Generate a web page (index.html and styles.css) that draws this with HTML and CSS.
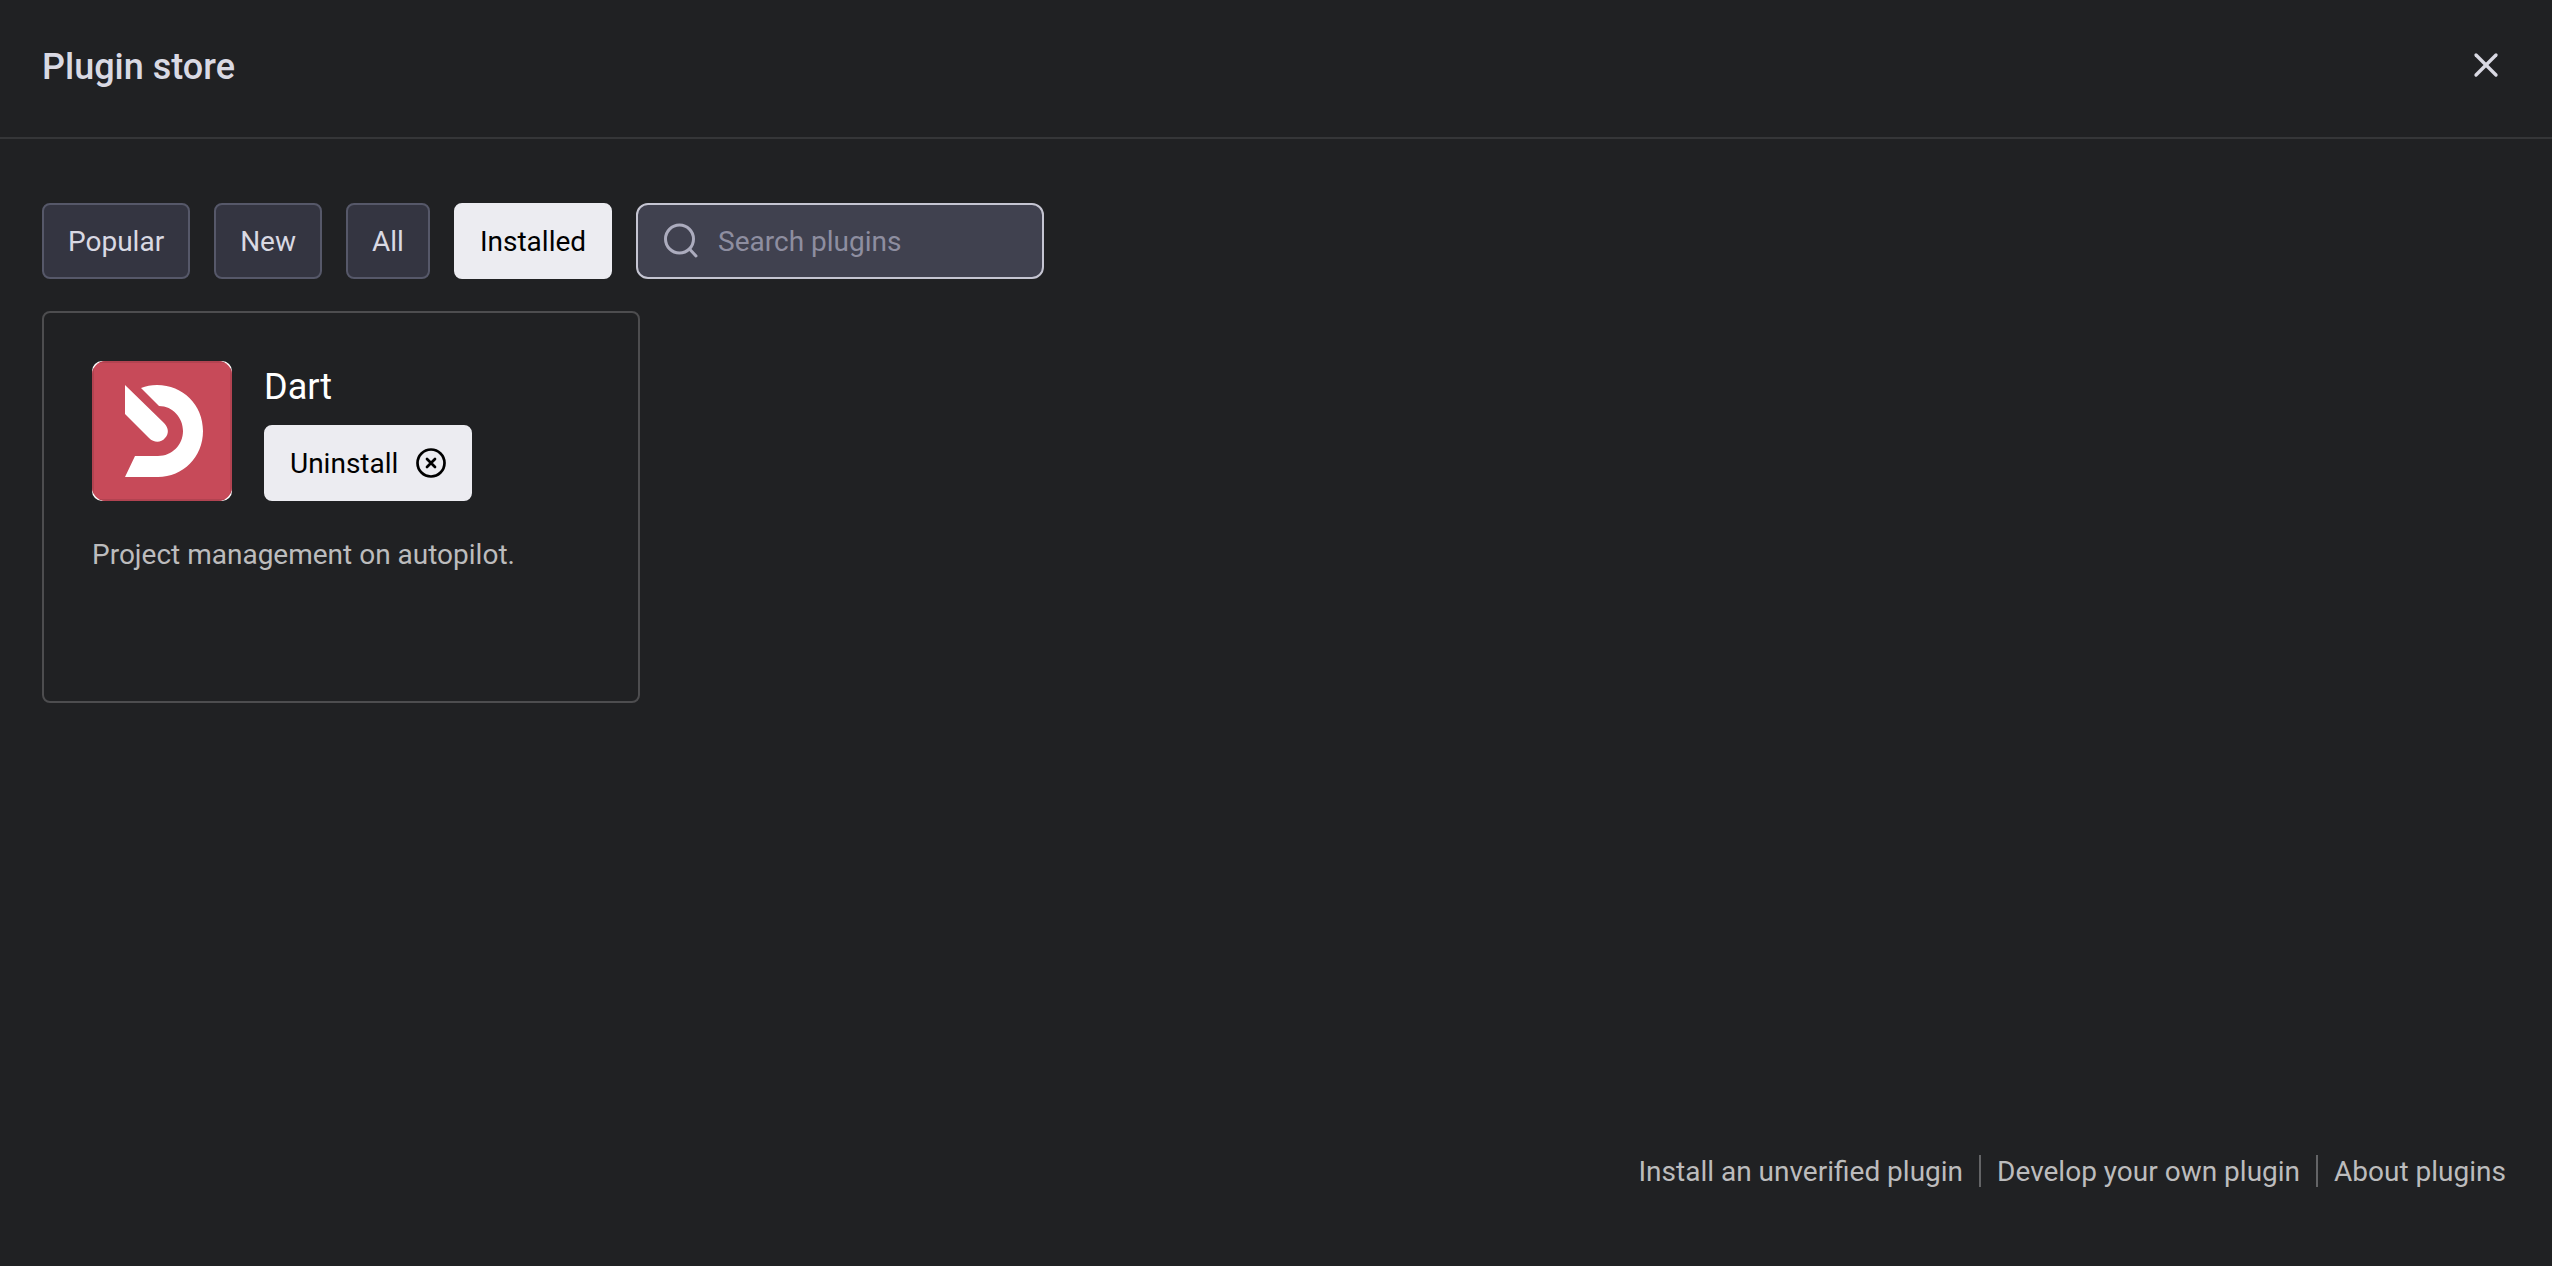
FILE: index.html
```html
<!DOCTYPE html>
<html lang="en">
<head>
    <meta charset="UTF-8">
    <meta name="viewport" content="width=device-width, initial-scale=1.0">
    <title>Plugin store</title>
    <link rel="stylesheet" href="styles.css">
</head>
<body>
    <div class="store">
        <header class="store-header">
            <h1>Plugin store</h1>
            <button type="button" class="close" aria-label="Close">
                <svg viewBox="0 0 24 24" fill="none" stroke="currentColor" stroke-width="2" stroke-linecap="round" stroke-linejoin="round">
                    <line x1="18" y1="6" x2="6" y2="18"></line>
                    <line x1="6" y1="6" x2="18" y2="18"></line>
                </svg>
            </button>
        </header>

        <main class="content">
            <!-- Filters and search -->
            <div class="toolbar">
                <button type="button" class="btn">Popular</button>
                <button type="button" class="btn">New</button>
                <button type="button" class="btn">All</button>
                <button type="button" class="btn btn-light">Installed</button>
                <label class="search">
                    <svg viewBox="0 0 40 40" fill="none" stroke="currentColor" stroke-width="3" stroke-linecap="round" aria-hidden="true">
                        <circle cx="17.5" cy="17" r="14"></circle>
                        <line x1="27.5" y1="27" x2="34" y2="34"></line>
                    </svg>
                    <input type="text" placeholder="Search plugins" aria-label="Search plugins">
                </label>
            </div>

            <div class="plugins">
                <article class="card">
                    <div class="card-top">
                        <div class="logo">
                            <svg viewBox="0 0 140 140" aria-hidden="true">
                                <rect width="140" height="140" fill="#c74a59"></rect>
                                <rect x="1" y="1" width="138" height="138" fill="none" stroke="#b24351" stroke-width="2"></rect>
                                <path fill="#fff" d="M33 24 L72 62 C77 67 77 73 73 77 C69 82 62 82 57 77 L33 53 Z"></path>
                                <path fill="#fff" d="M49 27 C54 25 59 24 65 24 C91 24 111 44 111 70 C111 96 91 116 66 116 H33 L43 95 H66 C80 95 91 84 91 70 C91 57 81 45 67 45 Z"></path>
                            </svg>
                        </div>
                        <div class="card-info">
                            <h2>Dart</h2>
                            <button type="button" class="btn btn-light">
                                Uninstall
                                <svg viewBox="0 0 32 32" fill="none" stroke="currentColor" stroke-width="2.7" stroke-linecap="round" aria-hidden="true">
                                    <circle cx="17" cy="15" r="13.5"></circle>
                                    <path d="M13 11 L21 19 M21 11 L13 19"></path>
                                </svg>
                            </button>
                        </div>
                    </div>
                    <p class="description">Project management on autopilot.</p>
                </article>
            </div>
        </main>

        <footer class="store-footer">
            <a href="#">Install an unverified plugin</a>
            <span class="divider"></span>
            <a href="#">Develop your own plugin</a>
            <span class="divider"></span>
            <a href="#">About plugins</a>
        </footer>
    </div>
</body>
</html>
```
FILE: styles.css
```css
* {
    margin: 0;
    padding: 0;
    box-sizing: border-box;
}

body {
    font-family: Roboto, "Liberation Sans", sans-serif;
    font-size: 28px;
    line-height: 40px;
    background-color: #202123;
    color: #d9d9e3;
}

button,
input {
    font: inherit;
}

.store {
    display: flex;
    flex-direction: column;
    min-height: 100vh;
    background-color: #202123;
}

.store-header {
    display: flex;
    justify-content: space-between;
    align-items: center;
    height: 139px;
    padding: 0 46px 8px 42px;
    border-bottom: 2px solid #353638;
}

h1 {
    padding-top: 4px;
    font-size: 36px;
    font-weight: 500;
}

.close {
    display: flex;
    border: none;
    background: none;
    color: #d9d9e3;
    cursor: pointer;
}

.close svg {
    width: 40px;
    height: 40px;
}

.content {
    flex: 1;
    padding: 64px 46px 32px 42px;
}

/* Filters */
.toolbar {
    display: flex;
    gap: 24px;
    margin-bottom: 32px;
}

.btn {
    display: flex;
    align-items: center;
    gap: 16px;
    height: 76px;
    padding: 2px 24px 0;
    border: 2px solid #565869;
    border-radius: 8px;
    background-color: #343541;
    color: #d9d9e3;
    cursor: pointer;
}

.btn-light {
    border-color: #ececf1;
    background-color: #ececf1;
    color: #000;
}

.btn svg {
    width: 32px;
    height: 32px;
}

.search {
    display: flex;
    align-items: center;
    gap: 16px;
    width: 408px;
    height: 76px;
    padding: 2px 24px 0;
    border: 2px solid #c5c5d2;
    border-radius: 12px;
    background-color: #40414f;
    color: #acacbe;
}

.search svg {
    flex: none;
    width: 40px;
    height: 40px;
}

.search input {
    width: 100%;
    border: none;
    outline: none;
    background: none;
    color: #fff;
}

.search input::placeholder {
    color: #8e8ea0;
}

/* Plugin cards */
.plugins {
    display: grid;
    grid-template-columns: repeat(4, 1fr);
    gap: 24px;
}

.card {
    display: flex;
    flex-direction: column;
    gap: 32px;
    padding: 48px;
    border: 2px solid #4d4d4f;
    border-radius: 8px;
}

.card-top {
    display: flex;
    gap: 32px;
}

.logo {
    width: 140px;
    height: 140px;
    border-radius: 10px;
    background-color: #fff;
    overflow: hidden;
}

.logo svg {
    display: block;
    border-radius: 14px;
}

.card-info {
    display: flex;
    flex-direction: column;
    justify-content: space-between;
    align-items: flex-start;
}

h2 {
    padding-top: 4px;
    font-size: 36px;
    font-weight: 400;
    line-height: 44px;
    color: #fff;
}

.description {
    min-height: 120px;
    padding-top: 2px;
    color: #bcbcbd;
}

/* Footer links */
.store-footer {
    display: flex;
    justify-content: flex-end;
    align-items: center;
    gap: 16px;
    padding: 0 46px 74px;
}

.store-footer a {
    padding-top: 2px;
    color: #bcbcbd;
    text-decoration: none;
}

.divider {
    width: 2px;
    height: 32px;
    background-color: #636466;
}

@media (max-width: 1400px) {
    .toolbar {
        flex-wrap: wrap;
    }

    .plugins {
        grid-template-columns: repeat(2, 1fr);
    }
}
```
